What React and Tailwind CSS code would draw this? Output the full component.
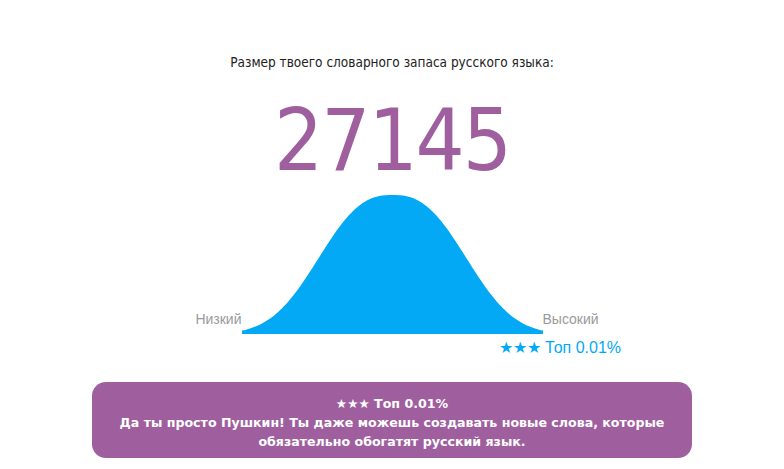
import React from "react";

// bell curve, flattened gaussian, 301 x 141
function bellPath() {
  const w = 301;
  const h = 141;
  const peak = 139;
  const pts = [];
  for (let i = 0; i <= 150; i++) {
    const x = (i / 150) * w;
    const d = Math.abs(x - w / 2);
    const y = h - peak * Math.exp(-Math.pow(d / 90, 2.55));
    pts.push(`${x.toFixed(2)},${y.toFixed(2)}`);
  }
  return `M0,${h} L${pts.join(" L")} L${w},${h} Z`;
}

const tahoma = { fontFamily: "'DejaVu Sans Condensed', 'DejaVu Sans', sans-serif" };
const tahomaBold = { fontFamily: "'DejaVu Sans', sans-serif" };

export default function App() {
  return (
    <div className="min-h-screen w-full bg-white flex flex-col items-center pt-[54px]">
      <p
        className="text-[13.5px] leading-[16px] text-[#222]"
        style={tahoma}
      >
        Размер твоего словарного запаса русского языка:
      </p>

      <div
        className="mt-[27px] text-[86px] leading-[86px] tracking-[-2px] text-[#9f5f9f]"
        style={tahoma}
      >
        27145
      </div>

      <div className="w-[600px] mt-[10px] flex flex-col">
        <div className="grid grid-cols-[1fr_301px_1fr] items-end font-['Liberation_Sans',Arial,sans-serif]">
          <span className="justify-self-end pb-[5px] text-[14px] leading-[20px] text-[#9a9a9a]">
            Низкий
          </span>
          <svg
            width="301"
            height="141"
            viewBox="0 0 301 141"
            className="block"
          >
            <path d={bellPath()} fill="#03a9f4" />
          </svg>
          <span className="justify-self-start pb-[5px] text-[14px] leading-[20px] text-[#9a9a9a]">
            Высокий
          </span>
        </div>

        <div className="mt-[4px] pr-[71px] text-right text-[16px] leading-[20px] text-[#03a9f4] font-['Liberation_Sans',Arial,sans-serif]">
          ★★★ Топ 0.01%
        </div>

        <div
          className="mt-[24px] rounded-[14px] bg-[#9f5f9f] pt-3 pb-[7px] px-4 text-center text-white font-bold text-[12.6px] leading-[19px]"
          style={tahomaBold}
        >
          <div>★★★ Топ 0.01%</div>
          <div>
            Да ты просто Пушкин! Ты даже можешь создавать новые слова, которые
            <br />
            обязательно обогатят русский язык.
          </div>
        </div>
      </div>
    </div>
  );
}
